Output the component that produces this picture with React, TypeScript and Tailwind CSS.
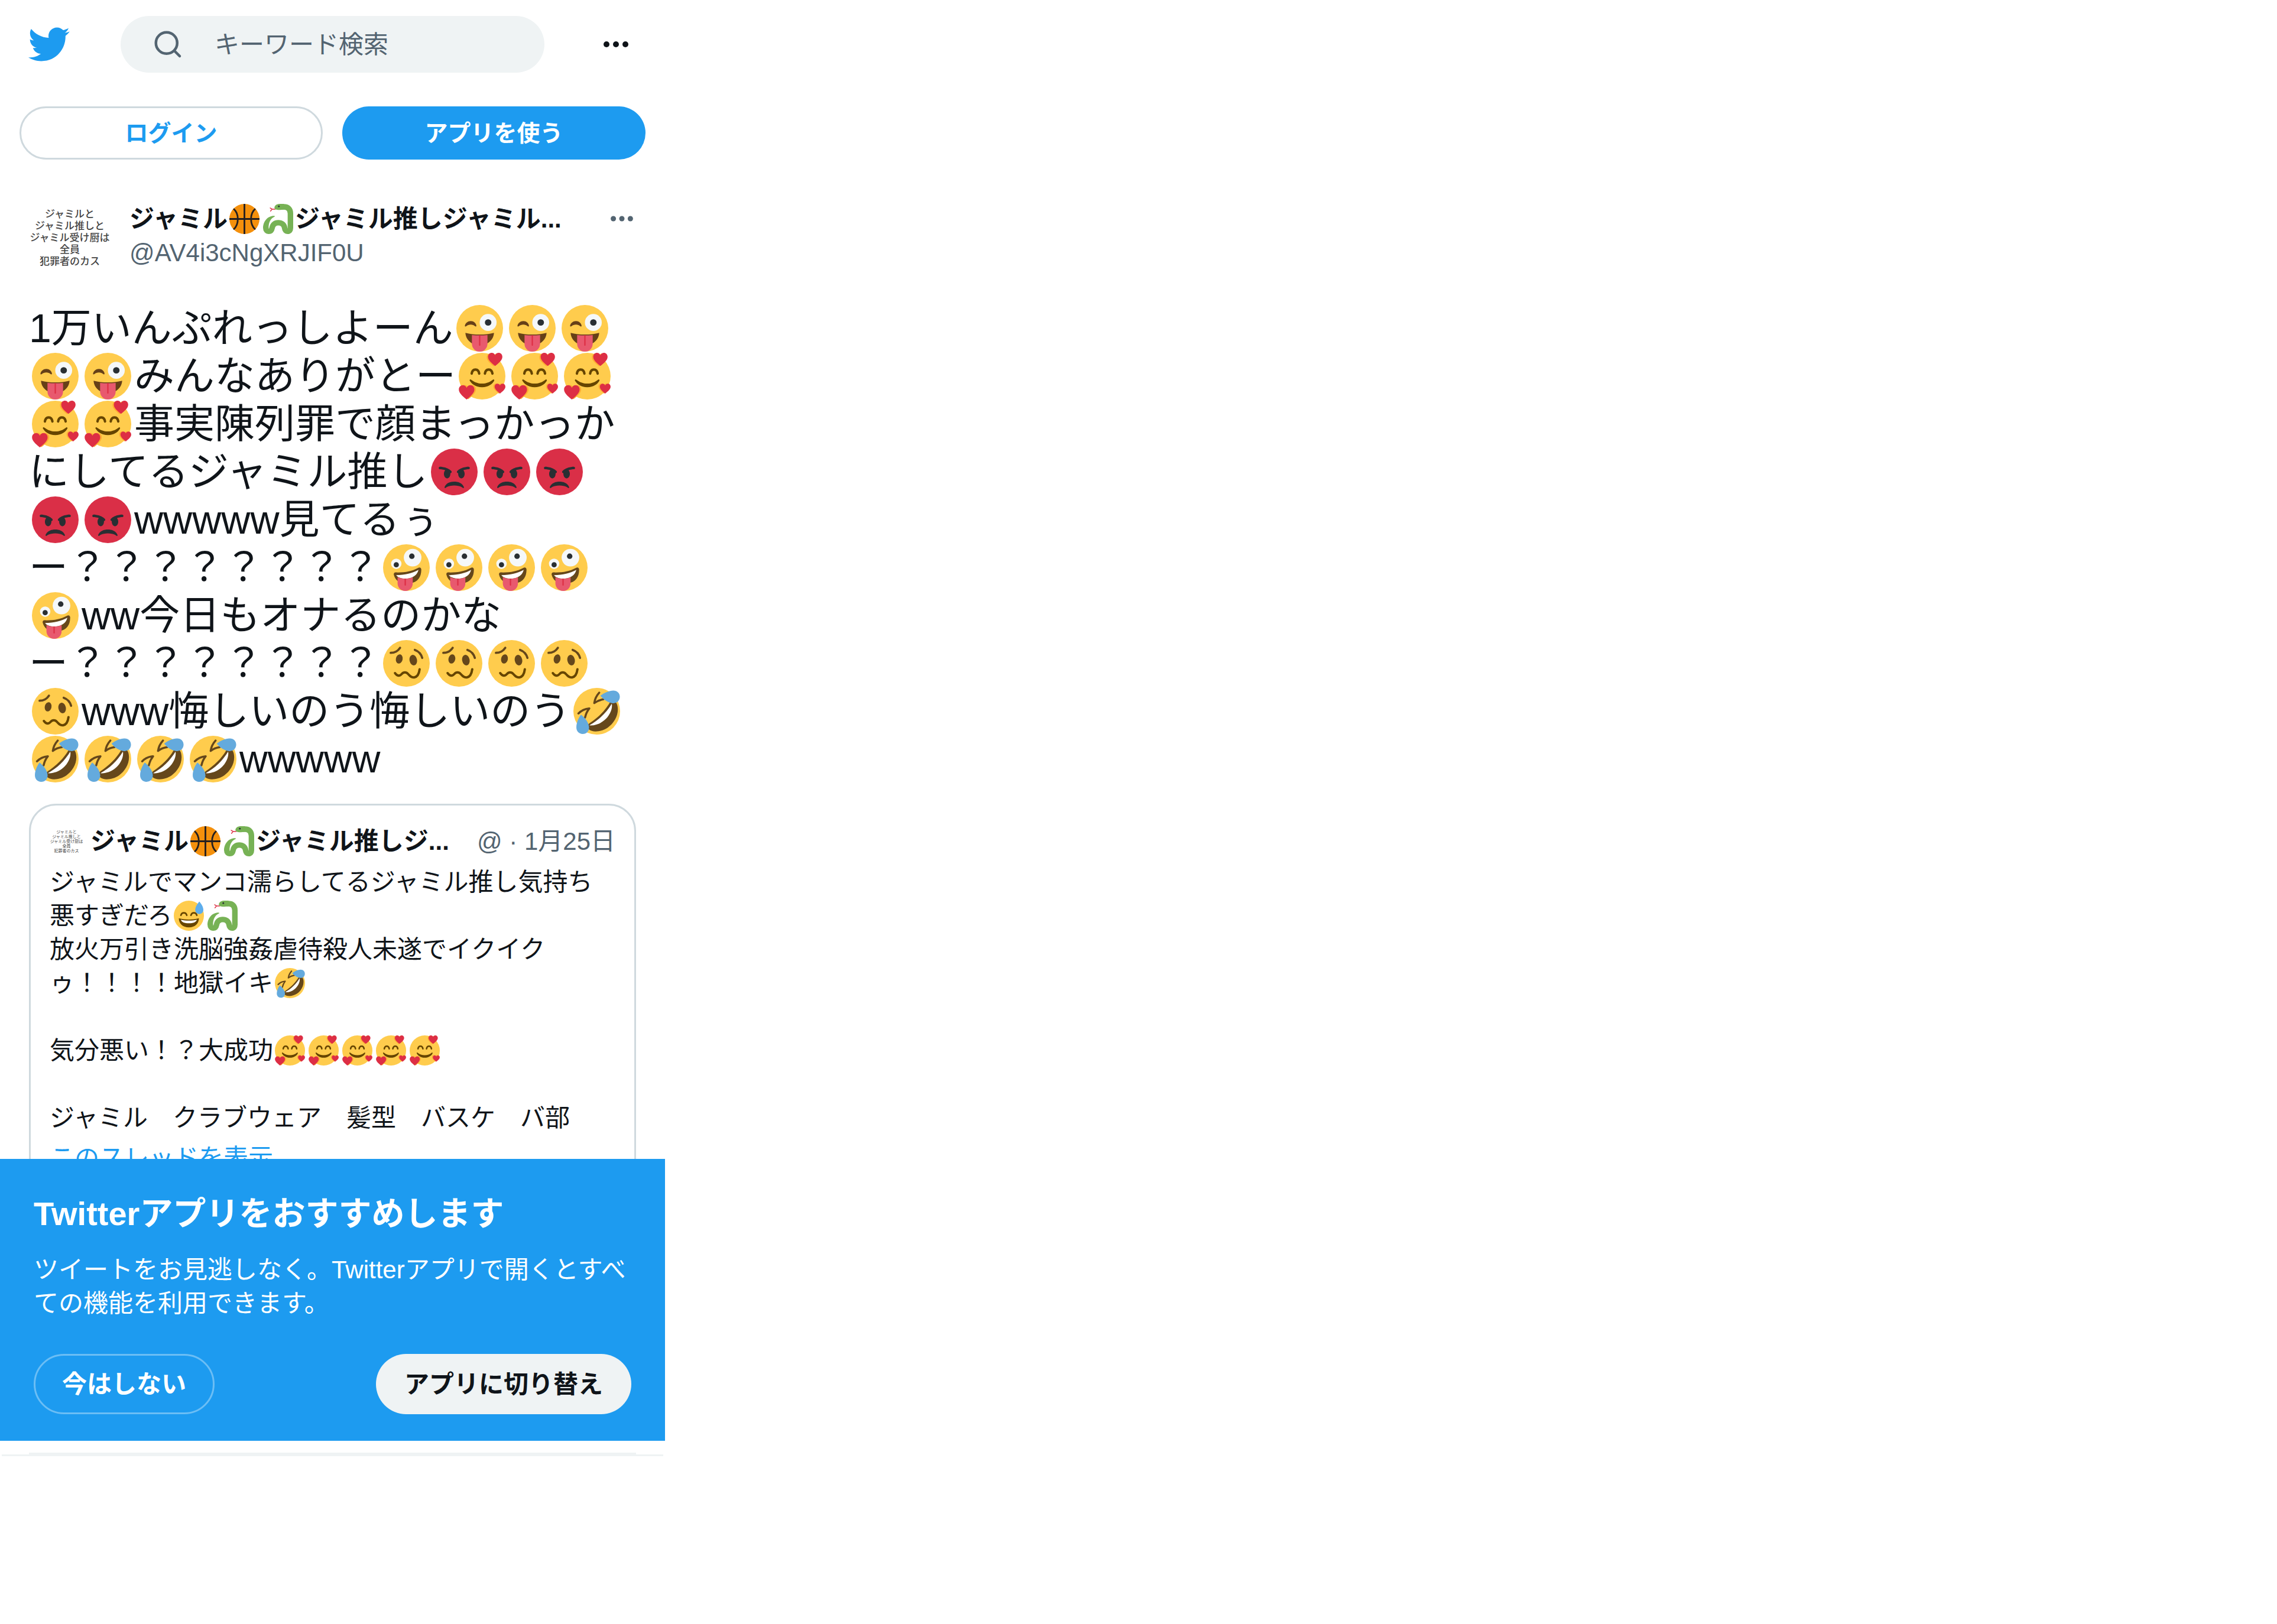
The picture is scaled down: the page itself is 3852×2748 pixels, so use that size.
import { Fragment } from "react";
import type { ReactNode } from "react";

type EmojiName =
  | "wink"
  | "love"
  | "rage"
  | "zany"
  | "woozy"
  | "rofl"
  | "sweat"
  | "ball"
  | "snake";

type Part = string | EmojiName[];

const AVATAR_LINES = [
  "ジャミルと",
  "ジャミル推しと",
  "ジャミル受け厨は",
  "全員",
  "犯罪者のカス",
];

function repeat(name: EmojiName, count: number): EmojiName[] {
  return Array.from({ length: count }, () => name);
}

const TWEET_LINES: Part[][] = [
  ["1万いんぷれっしよーん", repeat("wink", 3)],
  [repeat("wink", 2), "みんなありがとー", repeat("love", 3)],
  [repeat("love", 2), "事実陳列罪で顔まっかっか"],
  ["にしてるジャミル推し", repeat("rage", 3)],
  [repeat("rage", 2), "wwwww見てるぅ"],
  ["ー？？？？？？？？", repeat("zany", 4)],
  [repeat("zany", 1), "ww今日もオナるのかな"],
  ["ー？？？？？？？？", repeat("woozy", 4)],
  [repeat("woozy", 1), "www悔しいのう悔しいのう", repeat("rofl", 1)],
  [repeat("rofl", 4), "wwwww"],
];

const QUOTE_LINES: Part[][] = [
  ["ジャミルでマンコ濡らしてるジャミル推し気持ち"],
  ["悪すぎだろ", ["sweat", "snake"]],
  ["放火万引き洗脳強姦虐待殺人未遂でイクイク"],
  ["ゥ！！！！地獄イキ", ["rofl"]],
  [],
  ["気分悪い！？大成功", repeat("love", 5)],
  [],
  ["ジャミル　クラブウェア　髪型　バスケ　バ部"],
];

const HEART =
  "M6 11C2.5 8.2 0 6 0 3.3 0 1.3 1.5 0 3.1 0 4.4 0 5.5.8 6 2 6.5.8 7.6 0 8.9 0 10.500 0 12 1.300 12 3.300 12 6 9.500 8.200 6 11z";

const DRAWINGS: Record<EmojiName, ReactNode> = {
  wink: (
    <>
      <circle cx="18" cy="18" r="18" fill="#FFCC4D" />
      <path
        fill="#664018"
        d="M6.600 15.800c.5-1.900 2.300-3.400 4.500-3.400 2.300 0 3.900 1.500 4.300 3.300.2.800-.4 1.200-1 .7-.9-.8-2-1.200-3.300-1.200-1.400 0-2.500.5-3.500 1.200-.6.500-1.200.100-1-.6z"
      />
      <circle cx="24.500" cy="13.500" r="6.500" fill="#F5F8FA" />
      <circle cx="24.500" cy="13.500" r="2.500" fill="#292F33" />
      <path
        fill="#664018"
        d="M7 21.500c3.500 1 7 1.300 11 1.300s7.500-.3 11-1.300c-.2 5-4.500 9.500-11 9.500S7.200 26.500 7 21.500z"
      />
      <path fill="#E8596E" d="M12 23.200c4 .4 8 .4 12 0V30a6 6 0 0 1-12 0z" />
      <path fill="#DD2E44" d="M17.500 23.400h1V31a.5.5 0 0 1-1 0z" />
    </>
  ),
  love: (
    <>
      <circle cx="18" cy="18" r="18" fill="#FFCC4D" />
      <g fill="none" stroke="#664500" strokeWidth="1.900" strokeLinecap="round">
        <path d="M10 16c.3-2 1.300-3.100 2.900-3.100s2.600 1.100 2.900 3.100M20.200 16c.3-2 1.300-3.100 2.900-3.100s2.600 1.100 2.900 3.100" />
      </g>
      <path
        fill="#664500"
        d="M8.600 20.700c-.3.300-.2.700.1 1.100 1.300 2.200 4.500 4.800 9.300 4.800s8-2.600 9.200-4.800c.3-.5.300-.9 0-1.100-.3-.3-.7-.1-1 .1-2.100 1.700-4.900 2.900-8.200 2.900-3.400 0-6-1.200-8.300-2.900-.4-.3-.8-.4-1.100-.1z"
      />
      <g fill="#FFAC33">
        <path d={HEART} transform="translate(21.600 .4) scale(.92)" />
        <path d={HEART} transform="translate(1.300 24.800)" />
        <path d={HEART} transform="translate(26.700 23.700) scale(.7)" />
      </g>
      <g fill="#DD2E44">
        <path d={HEART} transform="translate(22.600 0) scale(.92)" />
        <path d={HEART} transform="translate(.1 25)" />
        <path d={HEART} transform="translate(27.700 23.800) scale(.69)" />
      </g>
    </>
  ),
  rage: (
    <>
      <circle cx="18" cy="18" r="18" fill="#DA2F47" />
      <path
        fill="#292F33"
        d="M25.485 29.879C25.440 29.700 24.317 25.500 18 25.500s-7.440 4.200-7.485 4.379c-.055.217.043.442.237.554.195.111.439.078.6-.077.019-.019 1.954-1.856 6.648-1.856s6.630 1.837 6.648 1.855c.096.095.224.145.352.145.084 0 .169-.021.246-.064.196-.112.294-.339.239-.557zm-9.778-12.586C12.452 14.038 7.221 14 7 14c-.552 0-.999.447-.999.998-.001.552.446 1 .998 1.002.029 0 1.925.022 3.983.737-.593.640-.982 1.634-.982 2.763 0 1.934 1.119 3.500 2.500 3.500s2.500-1.566 2.500-3.500c0-.174-.019-.340-.037-.507.013 0 .025.007.037.007.256 0 .512-.098.707-.293.391-.391.391-1.023 0-1.414zM29 14c-.221 0-5.451.038-8.707 3.293-.391.391-.391 1.023 0 1.414.195.195.451.293.707.293.013 0 .024-.007.036-.007-.016.167-.036.333-.036.507 0 1.934 1.119 3.500 2.500 3.500s2.500-1.566 2.500-3.500c0-1.129-.389-2.123-.982-2.763 2.058-.715 3.954-.737 3.984-.737.551-.002.998-.450.997-1.002-.001-.551-.447-.998-.999-.998z"
      />
    </>
  ),
  zany: (
    <>
      <circle cx="18" cy="18" r="18" fill="#FFCC4D" />
      <circle cx="22.800" cy="10.300" r="6.800" fill="#F5F8FA" />
      <circle cx="22.200" cy="9.200" r="2.100" fill="#292F33" />
      <circle cx="10.200" cy="15" r="4" fill="#F5F8FA" />
      <circle cx="10.200" cy="15.800" r="2" fill="#292F33" />
      <path
        fill="#65471B"
        d="M9.700 21.700c7 .2 12.500-.9 17.300-3.500 1.300-.7 2.500-.1 2.500 1.400-.1 5.800-2.600 9.600-8.700 10.500C14 31 9.500 28.500 8.300 23.500c-.2-1 .3-1.800 1.400-1.800z"
      />
      <path
        fill="#FFF"
        d="M10.100 23.800c6.900-.2 12.600-1.400 17.200-4.100-.7 3.600-4 6.300-8.800 6.700-4 .300-7-.8-8.400-2.600z"
      />
      <path fill="#E8596E" d="M11.200 25.300c2 1 4.100 1.300 6.300 1.200 1.900 0 3.700-.4 5.400-1.100V30c0 3.500-2.400 6-5.700 6-3.400 0-6-2.500-6-6z" />
      <path fill="#DD2E44" d="M16.600 26.500h1v4.900a.5.5 0 0 1-1 0z" />
    </>
  ),
  woozy: (
    <>
      <circle cx="18" cy="18" r="18" fill="#FFCC4D" />
      <g fill="none" stroke="#65471B" strokeWidth="1.700" strokeLinecap="round">
        <path d="M5.900 9.900c3 0 5.600-1.500 7.200-3.900M24.500 7.600c2.700 1 4.900 3.200 5.700 6.200" />
      </g>
      <ellipse cx="12.500" cy="14.600" rx="2.600" ry="3.600" fill="#65471B" transform="rotate(12 12.500 14.600)" />
      <ellipse cx="23.300" cy="15.500" rx="2.900" ry="4.100" fill="#65471B" transform="rotate(-12 23.300 15.500)" />
      <path
        fill="none"
        stroke="#664500"
        strokeWidth="1.800"
        strokeLinecap="round"
        d="M9.200 25.500c1.700 2.500 3.700 2.500 5.300.6 1.300-1.500 3.400-1.500 4.700 0 1.400 1.600 2.800 3.100 4.900 2.700 2.500-.5 3.700-3.200 4.100-6.300"
      />
    </>
  ),
  rofl: (
    <>
      <circle cx="18" cy="18" r="18" fill="#FFCC4D" />
      <path
        fill="#65471B"
        d="M29 9.800c2.200-.8 4.400 1.200 5 4.200 1.300 6.300-2.300 13-7.500 16.600-4.800 3.200-11.500 4-14.500 1.400-1.300-1.200-1.200-3.700.3-4.700C19.500 22.500 25 17 29 9.800z"
      />
      <path
        fill="#FFF"
        d="M29.600 12.200c.8 3.800-1.600 9.300-5.800 12.800-3.500 3-8.300 4.300-11.500 3.800C19.500 25 25.500 19 29.600 12.200z"
      />
      <g fill="none" stroke="#65471B" strokeWidth="1.600" strokeLinecap="round" strokeLinejoin="round">
        <path d="M3.900 19.700c2.300-2.400 5.100-3.600 8.400-3.900-1.600 2-2.700 4.300-3.300 7M19.900 3.700c-2 2.200-3.400 5-3.800 8 2-1.500 4.400-2.500 7-2.900" />
      </g>
      <path fill="#64AADD" d="M20.800 6c3-2.300 6.600-4 10-4 3 0 5.100 2.100 5 5-.1 3-2.400 5-5.300 4.800-3.600-.2-7.200-2.600-9.700-5.800z" />
      <path fill="#64AADD" d="M5.900 20.600c3.200 2.500 6.200 6.500 6.200 9.900 0 3-2.100 5-4.900 5-2.900 0-5-2.100-4.900-5.300.1-3.300 1.500-7 3.600-9.600z" />
    </>
  ),
  sweat: (
    <>
      <circle cx="18" cy="18" r="18" fill="#FFCC4D" />
      <path fill="#664500" d="M6 21c4 1.300 8 1.500 12 1.500s8-.2 12-1.500c0 6-4.500 11-12 11S6 27 6 21z" />
      <path fill="#FFF" d="M8.500 22.700c3 .9 6 1.100 9.500 1.100s6.500-.2 9.500-1.100c-.7 3-4.500 4.300-9.500 4.300s-8.800-1.300-9.500-4.300z" />
      <g fill="none" stroke="#664500" strokeWidth="1.900" strokeLinecap="round">
        <path d="M8.500 17.500c.5-2 1.800-3 3.500-3s3 1 3.500 3M20.500 17.500c.5-2 1.800-3 3.500-3s3 1 3.500 3" />
      </g>
      <path fill="#5DADEC" d="M30.500 1c2.700 3.300 4.800 6.700 4.800 10 0 3-2.100 5-4.800 5s-4.900-2-4.900-5c0-3.300 2.200-6.700 4.900-10z" />
    </>
  ),
  ball: (
    <>
      <circle cx="18" cy="18" r="18" fill="#F4900C" />
      <path
        fill="none"
        stroke="#231F20"
        strokeWidth="2"
        d="M18 0v36M0 18h36M5 5.800c3.500 3 5.100 7.200 5.100 12.200S8.500 27.500 5 30.500M31 5.800c-3.500 3-5.100 7.200-5.100 12.200s1.600 9.500 5.100 12.500"
      />
    </>
  ),
  snake: (
    <>
      <path
        fill="none"
        stroke="#DD2E44"
        strokeWidth="1"
        strokeLinecap="round"
        strokeLinejoin="round"
        d="M14.500 6.300h-3.700L8.500 4.900M10.800 6.300L8.900 8.600"
      />
      <path
        fill="none"
        stroke="#77B255"
        strokeWidth="6.600"
        strokeLinecap="round"
        d="M22 3.500h3c5 0 7.700 3 7.700 8v17.300c0 2.500-1.200 3.900-3.300 3.900s-3.300-1.500-3.600-3.900c-.6-4.300-3.800-6.300-7.600-6.300s-6.600 2-7.400 6.300c-.5 2.500-1.700 3.900-3.900 3.900-2.300 0-3.600-1.400-3.600-3.900"
      />
      <path fill="#77B255" d="M0 29c0-8 5.500-14.700 13-14.700 1.500 0 1.500.6.300 1.300-4.300 2-6.700 6.500-6.700 13.400z" />
      <path fill="#77B255" d="M25 0c-5-.5-9.500 0-11 3-1.200 2.500.5 4.200 4 4.200 3 .1 4.500-.4 7-.3z" />
      <circle cx="18.900" cy="3" r="1" fill="#292F33" />
    </>
  ),
};

function Emoji({ name, large }: { name: EmojiName; large?: boolean }) {
  return (
    <svg
      viewBox="0 0 36 36"
      aria-hidden="true"
      className={
        large
          ? "mx-[5px] h-[79px] w-[79px] shrink-0"
          : "mx-[3px] h-[51px] w-[51px] shrink-0"
      }
    >
      {DRAWINGS[name]}
    </svg>
  );
}

function RichLine({ parts, large }: { parts: Part[]; large?: boolean }) {
  return (
    <div className={large ? "flex h-[81px] items-center" : "flex h-[57px] items-center"}>
      {parts.map((part, i) =>
        typeof part === "string" ? (
          <span
            key={i}
            className={
              part.includes("？？？") || part === "wwwww"
                ? "text-[66px] whitespace-nowrap"
                : "whitespace-nowrap"
            }
          >
            {part}
          </span>
        ) : (
          <Fragment key={i}>
            {part.map((name, j) => (
              <Emoji key={j} name={name} large={large} />
            ))}
          </Fragment>
        )
      )}
    </div>
  );
}

function Avatar({ small }: { small?: boolean }) {
  return (
    <div
      className={
        small
          ? "flex h-[57px] w-[57px] shrink-0 flex-col items-center justify-center text-[7px] leading-[8px] whitespace-nowrap text-[#444]"
          : "flex h-[138px] w-[138px] shrink-0 flex-col items-center justify-center text-[17px] leading-[20px] font-medium whitespace-nowrap text-[#444]"
      }
    >
      {AVATAR_LINES.map((line) => (
        <span key={line}>{line}</span>
      ))}
    </div>
  );
}

function Dots({ className }: { className: string }) {
  return (
    <svg viewBox="0 0 60 60" fill="currentColor" aria-hidden="true" className={className}>
      <circle cx="14" cy="30" r="5" />
      <circle cx="30" cy="30" r="5" />
      <circle cx="46" cy="30" r="5" />
    </svg>
  );
}

function Header() {
  return (
    <header>
      <div className="flex h-[150px] items-center pr-[53px] pl-[45px]">
        <a href="#" aria-label="Twitter" className="shrink-0 text-[#1d9bf0]">
          <svg viewBox="0 0 24 24" fill="currentColor" className="h-[74px] w-[74px]">
            <path d="M23.643 4.937c-.835.370-1.732.620-2.675.733.962-.576 1.700-1.490 2.048-2.578-.9.534-1.897.922-2.958 1.130-.85-.904-2.060-1.470-3.400-1.470-2.572 0-4.658 2.086-4.658 4.660 0 .364.042.718.120 1.060-3.873-.195-7.304-2.050-9.602-4.868-.4.690-.63 1.490-.63 2.342 0 1.616.823 3.043 2.072 3.878-.764-.025-1.482-.234-2.110-.583v.060c0 2.257 1.605 4.140 3.737 4.568-.392.106-.803.162-1.227.162-.3 0-.593-.028-.877-.082.593 1.850 2.313 3.198 4.352 3.234-1.595 1.250-3.604 1.995-5.786 1.995-.376 0-.747-.022-1.112-.065 2.062 1.323 4.510 2.093 7.140 2.093 8.570 0 13.255-7.098 13.255-13.254 0-.2-.005-.402-.014-.602.910-.658 1.700-1.477 2.323-2.410z" />
          </svg>
        </a>
        <label className="mr-[91px] ml-[85px] flex h-[96px] min-w-0 flex-1 items-center gap-[52px] rounded-full bg-[#eff3f4] pl-[53px] text-[#536471]">
          <svg
            viewBox="0 0 24 24"
            fill="none"
            stroke="currentColor"
            strokeWidth="2"
            strokeLinecap="round"
            aria-hidden="true"
            className="h-[54px] w-[54px] shrink-0"
          >
            <circle cx="11" cy="11" r="8" />
            <path d="M16.900 16.900l4 4" />
          </svg>
          <input
            type="search"
            aria-label="キーワード検索"
            placeholder="キーワード検索"
            className="w-full min-w-0 bg-transparent outline-none placeholder:text-[#536471]"
          />
        </label>
        <button type="button" aria-label="もっと見る" className="shrink-0">
          <Dots className="h-[60px] w-[60px]" />
        </button>
      </div>
      <div className="mt-[30px] grid grid-cols-2 gap-[33px] px-[33px] text-[39px] font-bold">
        <button
          type="button"
          className="h-[90px] rounded-full border-[3px] border-[#cfd9de] text-[#1d9bf0]"
        >
          ログイン
        </button>
        <button type="button" className="h-[90px] rounded-full bg-[#1d9bf0] text-white">
          アプリを使う
        </button>
      </div>
    </header>
  );
}

function QuotedTweet() {
  return (
    <section className="mt-[35px] rounded-[46px] border-[3px] border-[#cfd9de] px-[32px] pt-[32px] pb-[437px]">
      <div className="flex items-center">
        <Avatar small />
        <div className="ml-[12px] flex items-center font-bold whitespace-nowrap">
          <span>ジャミル</span>
          <Emoji name="ball" />
          <Emoji name="snake" />
          <span>ジャミル推しジ...</span>
        </div>
        <span className="ml-auto whitespace-nowrap text-[#536471]">@ · 1月25日</span>
      </div>
      <div className="mt-[12px]">
        {QUOTE_LINES.map((parts, i) => (
          <RichLine key={i} parts={parts} />
        ))}
      </div>
      <a href="#" className="mt-[11px] block text-[#1d9bf0]">
        このスレッドを表示
      </a>
    </section>
  );
}

function AppBanner() {
  return (
    <aside className="absolute inset-x-0 bottom-[26px] bg-[#1d9bf0] px-[57px] pt-[52px] pb-[45px] text-white">
      <h2 className="text-[56px] leading-[81px] font-bold">Twitterアプリをおすすめします</h2>
      <p className="mt-[26px]">
        ツイートをお見逃しなく。Twitterアプリで開くとすべての機能を利用できます。
      </p>
      <div className="mt-[57px] flex justify-between font-bold">
        <button
          type="button"
          className="h-[102px] rounded-full border-[3px] border-white/35 px-[45px]"
        >
          今はしない
        </button>
        <button type="button" className="h-[102px] rounded-full bg-[#eff3f4] px-[48px] text-[#0f1419]">
          アプリに切り替え
        </button>
      </div>
    </aside>
  );
}

export default function App() {
  return (
    <div className="min-h-screen bg-white font-['Liberation_Sans','Noto_Sans_CJK_JP',sans-serif] text-[42px] leading-[57px] text-[#0f1419]">
      <main lang="ja" className="relative w-full max-w-[1125px]">
        <Header />
        <article className="mx-[49px] mt-[64px] border-b-[3px] border-[#eff3f4]">
          <div className="flex items-start">
            <Avatar />
            <div className="ml-[32px] min-w-0 flex-1 pt-[8px]">
              <div className="flex h-[57px] items-center font-bold whitespace-nowrap">
                <span>ジャミル</span>
                <Emoji name="ball" />
                <Emoji name="snake" />
                <span>ジャミル推しジャミル...</span>
              </div>
              <a href="#" className="block text-[#536471]">
                @AV4i3cNgXRJIF0U
              </a>
            </div>
            <button type="button" aria-label="その他" className="mt-[9px] -mr-[3px] text-[#536471]">
              <Dots className="h-[54px] w-[54px]" />
            </button>
          </div>
          <div className="mt-[43px] text-[68px] leading-[81px]">
            {TWEET_LINES.map((parts, i) => (
              <RichLine key={i} parts={parts} large />
            ))}
          </div>
          <QuotedTweet />
          <div className="h-[30px]" />
        </article>
        <div className="mx-[3px] h-[3px] bg-[#eff3f4]" />
        <AppBanner />
      </main>
    </div>
  );
}
